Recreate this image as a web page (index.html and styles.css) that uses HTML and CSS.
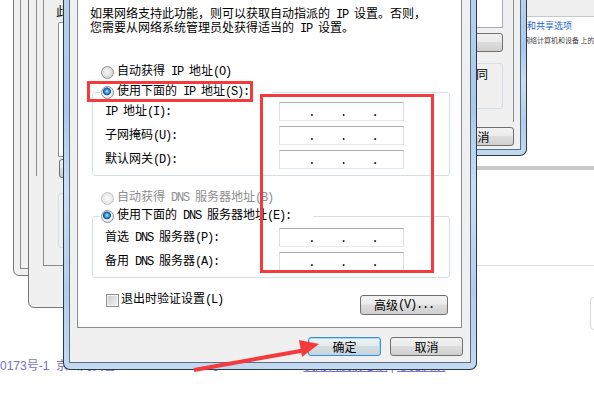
FILE: index.html
```html
<!DOCTYPE html>
<html lang="zh-CN">
<head>
    <meta charset="UTF-8">
    <meta name="viewport" content="width=device-width, initial-scale=1.0">
    <title>Internet 协议版本 4 (TCP/IPv4) 属性</title>
    <link rel="stylesheet" href="styles.css">
</head>
<body>
    <!-- page behind the windows -->
    <div class="page-bg">
        <div class="bg-line"></div>
        <div class="bg-card"></div>
        <div class="bg-footer">0173号-1&nbsp;&nbsp;京公网安备11000002000001号&nbsp;&nbsp;©2017&nbsp;Baidu&nbsp;&nbsp;<u>使用百度前必读</u>&nbsp;|&nbsp;<u>意见反馈</u></div>
    </div>

    <!-- stacked windows on the left -->
    <div class="win-left wl1"></div>
    <div class="win-left wl2"></div>
    <div class="win-left wl3"><div class="wl3-inner"></div></div>
    <div class="win-left wl4">
        <div class="wl4-title">此</div>
        <div class="wl4-list"></div>
        <div class="btn wl4-btn"></div>
        <div class="wl4-group"></div>
    </div>

    <!-- control panel page on the right -->
    <div class="browser">
        <div class="browser-bar"></div>
        <div class="browser-link">网络和共享选项</div>
        <div class="browser-note">查看网络计算机和设备 上的</div>
    </div>

    <!-- connection properties dialog behind -->
    <div class="win-back">
        <div class="win-back-body">
            <div class="wb-panel">
                <div class="wb-box"></div>
                <div class="btn wb-btn"></div>
                <div class="wb-group">相同</div>
            </div>
            <button class="btn wb-cancel">取消</button>
        </div>
    </div>

    <!-- IPv4 properties dialog -->
    <div class="dlg">
        <div class="dlg-body">
            <div class="tab-page">
                <p class="intro">如果网络支持此功能，则可以获取自动指派的<span class="en"> IP </span>设置。否则，<br>您需要从网络系统管理员处获得适当的<span class="en"> IP </span>设置。</p>

                <label class="opt opt-top"><span class="radio"></span>自动获得<span class="en"> IP </span>地址<span class="en">(O)</span></label>

                <fieldset class="group group-ip">
                    <legend class="legend-ip"><span class="opt"><span class="radio on"></span>使用下面的<span class="en"> IP </span>地址<span class="en">(S):</span></span></legend>
                    <div class="rows">
                        <div class="row"><span class="lbl"><span class="en">IP </span>地址<span class="en">(I):</span></span><span class="ipbox"><b>.</b><b>.</b><b>.</b></span></div>
                        <div class="row"><span class="lbl">子网掩码<span class="en">(U):</span></span><span class="ipbox"><b>.</b><b>.</b><b>.</b></span></div>
                        <div class="row"><span class="lbl">默认网关<span class="en">(D):</span></span><span class="ipbox"><b>.</b><b>.</b><b>.</b></span></div>
                    </div>
                </fieldset>

                <label class="opt opt-off"><span class="radio off"></span>自动获得<span class="en"> DNS </span>服务器地址<span class="en">(B)</span></label>

                <fieldset class="group group-dns">
                    <legend class="legend-dns"><span class="opt"><span class="radio on"></span>使用下面的<span class="en"> DNS </span>服务器地址<span class="en">(E):</span></span></legend>
                    <div class="rows rows-dns">
                        <div class="row"><span class="lbl">首选<span class="en"> DNS </span>服务器<span class="en">(P):</span></span><span class="ipbox"><b>.</b><b>.</b><b>.</b></span></div>
                        <div class="row"><span class="lbl">备用<span class="en"> DNS </span>服务器<span class="en">(A):</span></span><span class="ipbox"><b>.</b><b>.</b><b>.</b></span></div>
                    </div>
                </fieldset>

                <div class="bottom-row">
                    <label class="check"><span class="box"></span>退出时验证设置<span class="en">(L)</span></label>
                    <button class="btn adv">高级<span class="en">(V)...</span></button>
                </div>
            </div>
            <div class="actions">
                <button class="btn default">确定</button>
                <button class="btn">取消</button>
            </div>
        </div>
    </div>

    <!-- red annotations -->
    <svg class="marks" width="594" height="394" viewBox="0 0 594 394">
        <rect x="88.5" y="82.5" width="163" height="18" fill="none" stroke="#f43a3a" stroke-width="3"/>
        <rect x="261.5" y="95.5" width="171" height="176" fill="none" stroke="#f43a3a" stroke-width="3"/>
        <line x1="194" y1="370" x2="306" y2="350" stroke="#f43a3a" stroke-width="4"/>
        <polygon points="319,344 299,340 302,357" fill="#f43a3a"/>
    </svg>
</body>
</html>
```

FILE: styles.css
```css
* {
    box-sizing: border-box;
}
html, body {
    margin: 0;
}
body {
    position: relative;
    width: 594px;
    height: 394px;
    overflow: hidden;
    background: #fff;
    font-family: "Liberation Mono", "Noto Sans CJK SC", monospace;
    font-size: 12px;
    color: #000;
}
/* half-width latin like the system font */
.en {
    letter-spacing: -1.2px;
}

/* background page */
.page-bg {
    padding-top: 265px;
}
.bg-line {
    margin-left: 470px;
    height: 1px;
    background: #dadada;
}
.bg-card {
    margin: 31px 0 0 590px;
    width: 20px;
    height: 33px;
    border: 1px solid #d8d8d8;
    border-radius: 4px;
}
.bg-footer {
    margin-top: 29px;
    white-space: nowrap;
    font-family: "Liberation Sans", "Noto Sans CJK SC", sans-serif;
    line-height: 14px;
    color: #7272d0;
}

/* left windows */
.win-left {
    position: absolute;
    top: -10px;
    width: 70px;
    background: #f0f0f0;
    border: 1px solid #777;
}
.wl1 {
    left: 13px;
    height: 286px;
    border-radius: 0 0 0 6px;
}
.wl2 {
    left: 20px;
    height: 279px;
    border-color: #888;
}
.wl3 {
    left: 28px;
    height: 318px;
    border-radius: 0 0 0 6px;
}
.wl3-inner {
    margin-left: 7px;
    height: 185px;
    border-left: 1px solid #8a8a8a;
}
.wl4 {
    left: 43px;
    height: 276px;
    padding-left: 14px;
    border-color: #888;
}
.wl4-title {
    margin: 15px 0 0 -2px;
    line-height: 14px;
}
.wl4-list {
    margin-top: 2px;
    height: 135px;
    background: #fff;
    border: 1px solid #8c8c8c;
    border-radius: 2px 0 0 0;
}
.wl4-btn {
    margin: 2px 0 0 1px;
    height: 15px;
}
.wl4-group {
    margin-top: 15px;
    height: 55px;
    border: 1px solid #d5dfe5;
    border-radius: 3px;
}

/* control panel page */
.browser {
    position: absolute;
    left: 470px;
    top: 0;
    width: 124px;
    height: 170px;
    background: #fff;
    border-bottom: 4px solid #c8c8c8;
}
.browser-bar {
    height: 17px;
    background: #f0f0f0;
    border-bottom: 1px solid #c9c9c9;
}
.browser-link {
    margin-top: 3px;
    padding-left: 39px;
    font-family: "Noto Sans CJK SC", sans-serif;
    font-size: 9px;
    line-height: 11px;
    color: #1e62d0;
    white-space: nowrap;
}
.browser-note {
    margin-top: 5px;
    padding-left: 39px;
    font-family: "Noto Sans CJK SC", sans-serif;
    font-size: 7px;
    line-height: 8px;
    color: #444;
    white-space: nowrap;
}

/* aero window frame */
.win-back,
.dlg {
    position: absolute;
    border: 1px solid rgba(20, 30, 40, 0.85);
    border-radius: 0 0 7px 7px;
    background: linear-gradient(#bad3ee, #a9c9ec 35%, #c9def4 55%, #b2cdec 80%, #c2d9f1);
    padding: 5px;
}
.win-back {
    left: 300px;
    top: -10px;
    width: 227px;
    height: 166px;
}
.win-back-body,
.dlg-body {
    height: 100%;
    border: 1px solid #5b6e82;
    background: #f0f0f0;
}
.win-back-body {
    display: flex;
    flex-direction: column;
    align-items: flex-end;
}
.wb-panel {
    margin-right: 6px;
    width: 150px;
    height: 125px;
    border-right: 1px solid #898c95;
    padding-right: 10px;
    display: flex;
    flex-direction: column;
    align-items: flex-end;
}
.wb-box {
    width: 120px;
    height: 31px;
    background: #fff;
    border: 1px solid #a5acb5;
    border-top: none;
}
.wb-btn {
    margin-top: 5px;
    width: 80px;
    height: 16px;
}
.wb-group {
    margin-top: 11px;
    width: 120px;
    height: 46px;
    border: 1px solid #d5dfe5;
    border-radius: 3px;
    padding: 5px 14px 0 0;
    text-align: right;
    line-height: 14px;
}
.wb-cancel {
    margin: 5px 6px 0 0;
    width: 73px;
    padding-left: 10px;
}

/* main dialog */
.dlg {
    left: 63px;
    top: -30px;
    width: 414px;
    height: 400px;
    padding-bottom: 6px;
}
.tab-page {
    margin: 7px 8px 0 7px;
    height: 344px;
    border: 1px solid #898c95;
    background: #fff;
    padding-top: 23px;
}
.intro {
    margin: 0 0 0 12px;
    line-height: 14px;
    white-space: nowrap;
}
.opt {
    display: flex;
    align-items: center;
    height: 14px;
    line-height: 14px;
    white-space: pre;
}
.opt .radio {
    margin-right: 3px;
}
.opt-top {
    margin: 29px 0 0 23px;
}
.opt-off {
    margin: 15px 0 0 23px;
    color: #8d8d8d;
}
.radio {
    flex: none;
    width: 13px;
    height: 13px;
    border: 1px solid #8e8f8f;
    border-radius: 50%;
    background: radial-gradient(circle at 45% 45%, #f6f6f6 0, #dedede 55%, #c4c4c4 100%);
}
.radio.on {
    background: radial-gradient(circle at 45% 40%, #b4ecff 0, #3a9be4 22%, #0f4f9a 40%, #f4f4f4 48%, #e2e2e2 80%, #cfcfcf 100%);
}
.radio.off {
    border-color: #c2c2c2;
    background: radial-gradient(circle, #fafafa 0, #eaeaea 60%, #dcdcdc 100%);
}

.group {
    min-width: 0;
    margin: 6px 11px 0 14px;
    padding: 0;
    border: 1px solid #d5dfe5;
    border-radius: 3px;
}
.group-dns {
    margin-top: 4px;
}
.group legend {
    margin-left: 7px;
    padding: 0 0 0 1px;
}
.legend-ip {
    width: 172px;
}
.legend-dns {
    width: 213px;
}
.rows {
    display: flex;
    flex-direction: column;
    gap: 5px;
    padding: 3px 0 6px 12px;
}
.rows-dns {
    padding-top: 5px;
}
.row {
    display: flex;
    align-items: center;
    height: 19px;
}
.lbl {
    width: 174px;
    line-height: 14px;
    white-space: pre;
}
.ipbox {
    display: flex;
    align-items: center;
    justify-content: space-evenly;
    width: 125px;
    height: 19px;
    padding: 2px 0 0 4px;
    background: #fff;
    border: 1px solid #dbdfe6;
    border-top-color: #abadb3;
    border-bottom-color: #e3e9ef;
}
.ipbox b {
    font-weight: normal;
    line-height: 14px;
}

.bottom-row {
    display: flex;
    justify-content: space-between;
    align-items: flex-start;
    margin-top: 15px;
}
.check {
    display: flex;
    align-items: center;
    margin-left: 28px;
    height: 14px;
    line-height: 14px;
    white-space: nowrap;
}
.box {
    margin-right: 2px;
    width: 13px;
    height: 13px;
    border: 1px solid #8e8f8f;
    background: linear-gradient(135deg, #cbcbcb, #f4f4f4);
    box-shadow: inset 0 0 0 1px #f4f4f4;
}

.btn {
    display: flex;
    align-items: center;
    justify-content: center;
    height: 19px;
    padding: 0;
    font: inherit;
    color: #000;
    border: 1px solid #707070;
    border-radius: 3px;
    background: linear-gradient(#f2f2f2 0, #ebebeb 45%, #dddddd 50%, #cfcfcf 100%);
    white-space: pre;
}
.adv {
    margin: 2px 13px 0 0;
    width: 88px;
    height: 20px;
}
.actions {
    display: flex;
    justify-content: flex-end;
    gap: 9px;
    margin: 9px 7px 0 0;
}
.actions .btn {
    width: 73px;
}
.btn.default {
    border-color: #3c8ed4;
    box-shadow: inset 0 0 0 1px #a6dcf8;
    background: linear-gradient(#eef3f6 0, #e4eaee 45%, #d5dde2 50%, #cbd4da 100%);
}

.marks {
    position: absolute;
    left: 0;
    top: 0;
    pointer-events: none;
}
```
